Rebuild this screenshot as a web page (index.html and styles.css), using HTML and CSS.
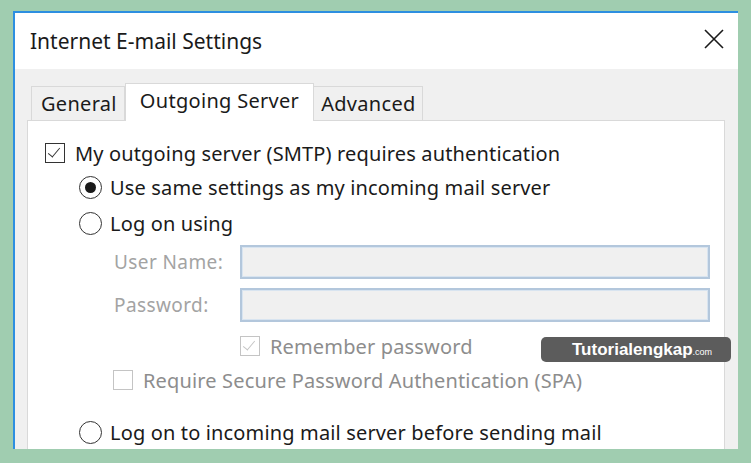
FILE: index.html
```html
<!DOCTYPE html>
<html lang="en">
<head>
    <meta charset="UTF-8">
    <meta name="viewport" content="width=device-width, initial-scale=1.0">
    <title>Internet E-mail Settings</title>
    <link rel="stylesheet" href="styles.css">
</head>
<body>

    <div class="dialog">
        <div class="titlebar">
            <span class="title">Internet E-mail Settings</span>
            <svg class="close" width="20" height="20" viewBox="0 0 20 20">
                <path d="M1 1 L19 19 M19 1 L1 19" stroke="#1a1a1a" stroke-width="1.6" fill="none"/>
            </svg>
        </div>

        <div class="content">
            <div class="tabs">
                <div class="tab">General</div>
                <div class="tab active">Outgoing Server</div>
                <div class="tab">Advanced</div>
            </div>

            <div class="panel">
                <div class="row row-auth">
                    <span class="check checked"></span>
                    <span>My outgoing server (SMTP) requires authentication</span>
                </div>
                <div class="row indent row-same">
                    <span class="radio selected"></span>
                    <span>Use same settings as my incoming mail server</span>
                </div>
                <div class="row indent row-logon">
                    <span class="radio"></span>
                    <span>Log on using</span>
                </div>
                <div class="row field row-user">
                    <label>User Name:</label>
                    <div class="input"></div>
                </div>
                <div class="row field row-pass">
                    <label>Password:</label>
                    <div class="input"></div>
                </div>
                <div class="row disabled row-remember">
                    <span class="check checked dim"></span>
                    <span>Remember password</span>
                </div>
                <div class="row disabled row-spa">
                    <span class="check dim"></span>
                    <span>Require Secure Password Authentication (SPA)</span>
                </div>
                <div class="row indent row-before">
                    <span class="radio"></span>
                    <span>Log on to incoming mail server before sending mail</span>
                </div>
            </div>
        </div>

        <div class="watermark">Tutorialengkap<small>.com</small></div>
    </div>

</body>
</html>
```

FILE: styles.css
```css
body {
    margin: 0;
    padding: 11px 13px 14px 13px;
    background-color: #a0cdb0;
    font-family: "Noto Sans", "Open Sans", sans-serif;
    color: #1a1a1a;
}
.dialog {
    position: relative;
    height: 436px;
    background: #f0f0f0;
    border-top: 2px solid #2d8fe0;
    border-left: 2px solid #2d8fe0;
    overflow: hidden;
}
.titlebar {
    height: 56px;
    background: #fff;
    display: flex;
    align-items: center;
    justify-content: space-between;
    padding: 0 14px 0 15px;
}
.title {
    font-size: 21px;
    margin-top: -1px;
}
.close {
    margin-top: -5px;
}
.content {
    padding: 14px 12px 0 12px;
}
.tabs {
    display: flex;
    padding-left: 4px;
    height: 37px;
    align-items: flex-end;
}
.tab {
    height: 34px;
    line-height: 34px;
    padding: 0 6px 0 7px;
    font-size: 20px;
    letter-spacing: 0.3px;
    border: 1px solid #d9d9d9;
    border-bottom: none;
    background: #f0f0f0;
    box-sizing: border-box;
}
.tab:first-child {
    padding: 0 7px 0 9px;
}
.tab + .tab {
    border-left: none;
}
.tab.active {
    height: 38px;
    line-height: 34px;
    background: #fff;
    padding: 0 14px 0 14px;
    position: relative;
    top: 1px;
    border-left: 1px solid #d9d9d9;
}
.tab.active + .tab {
    border-left: none;
}
.panel {
    background: #fff;
    border: 1px solid #d9d9d9;
    height: 400px;
    margin-right: 1px;
    padding: 17px 0 0 17px;
    font-size: 20px;
    letter-spacing: 0.15px;
}
.row {
    display: flex;
    align-items: center;
    height: 30px;
}
.row-same { margin-top: 4px; }
.row-logon { margin-top: 6px; }
.row-user { margin-top: 7px; height: 34px; }
.row-pass { margin-top: 9px; height: 34px; }
.row-remember { margin-top: 9px; padding-left: 195px; }
.row-spa { margin-top: 4px; padding-left: 68px; }
.row-before { margin-top: 22px; }
.indent {
    padding-left: 34px;
}
.check {
    position: relative;
    width: 20px;
    height: 20px;
    border: 1.5px solid #333;
    box-sizing: border-box;
    margin-right: 10px;
    flex: none;
}
.check.checked::after {
    content: "";
    position: absolute;
    left: 5px;
    top: 1px;
    width: 5px;
    height: 11px;
    border-right: 1.5px solid #333;
    border-bottom: 1.5px solid #333;
    transform: rotate(40deg);
}
.check.dim {
    border-color: #c4c4c4;
}
.check.dim::after {
    border-color: #c4c4c4;
}
.radio {
    width: 23px;
    height: 23px;
    border: 1.5px solid #333;
    border-radius: 50%;
    box-sizing: border-box;
    margin-right: 8px;
    flex: none;
    display: flex;
    align-items: center;
    justify-content: center;
}
.radio.selected::after {
    content: "";
    width: 11px;
    height: 11px;
    border-radius: 50%;
    background: #1a1a1a;
}
.field label {
    width: 126px;
    padding-left: 69px;
    color: #a3a3a3;
    font-size: 19px;
    letter-spacing: 0.4px;
}
.input {
    width: 470px;
    height: 34px;
    box-sizing: border-box;
    background: #f0f0f0;
    border: 2px solid #b3c7dc;
    box-shadow: inset 0 0 0 1px #d8e4f0;
}
.disabled {
    color: #8d8d8d;
}
.watermark {
    position: absolute;
    left: 526px;
    top: 324px;
    width: 190px;
    height: 25px;
    box-sizing: border-box;
    padding-left: 31px;
    border-radius: 5px;
    background: #5c5c5c;
    color: #fff;
    font-family: "Liberation Sans", Arial, sans-serif;
    font-weight: bold;
    font-size: 17px;
    line-height: 25px;
    letter-spacing: 0;
}
.watermark small {
    font-size: 9px;
    font-weight: normal;
}
```
